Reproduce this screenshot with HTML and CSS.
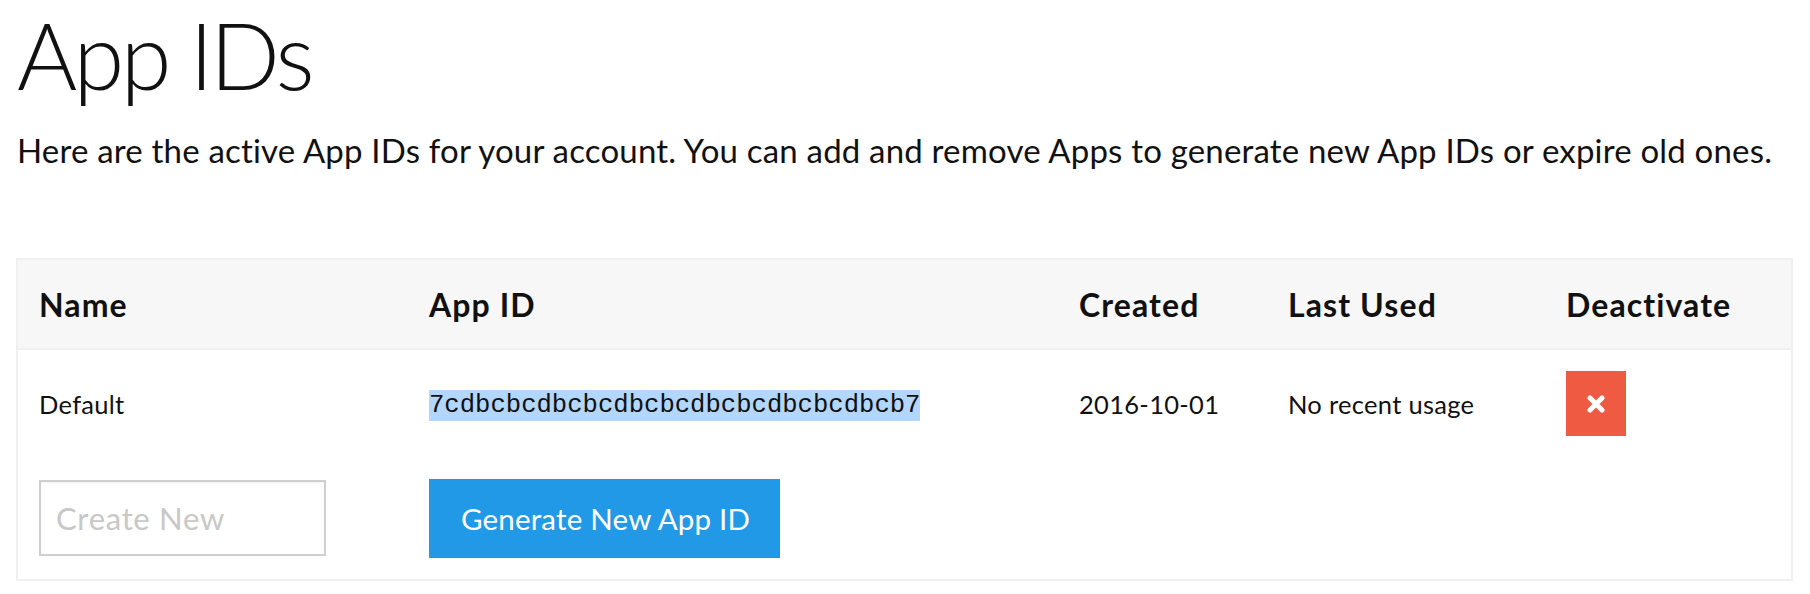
FILE: index.html
```html
<!DOCTYPE html>
<html>
<head>
<meta charset="utf-8">
<link rel="stylesheet" href="styles.css">
</head>
<body>
<main class="page">
  <h1 class="title">App IDs</h1>
  <p class="intro">Here are the active App IDs for your account. You can add and remove Apps to generate new App IDs or expire old ones.</p>
  <table class="ids">
    <colgroup>
      <col class="c1"><col class="c2"><col class="c3"><col class="c4"><col class="c5">
    </colgroup>
    <thead>
      <tr class="head">
        <th>Name</th>
        <th>App ID</th>
        <th>Created</th>
        <th>Last Used</th>
        <th>Deactivate</th>
      </tr>
    </thead>
    <tbody>
      <tr class="row">
        <td>Default</td>
        <td><span class="appid">7cdbcbcdbcbcdbcbcdbcbcdbcbcdbcb7</span></td>
        <td>2016-10-01</td>
        <td>No recent usage</td>
        <td><button class="del" type="button" aria-label="Deactivate"><svg width="18" height="18" viewBox="0 0 18 18"><path d="M3 3 L15 15 M15 3 L3 15" stroke="#fff" stroke-width="5" stroke-linecap="round"/></svg></button></td>
      </tr>
      <tr class="create">
        <td><input class="newname" type="text" placeholder="Create New"></td>
        <td colspan="4"><button class="gen" type="button">Generate New App ID</button></td>
      </tr>
    </tbody>
  </table>
</main>
</body>
</html>
```

FILE: styles.css
```css
html, body {
  margin: 0;
  padding: 0;
  background: #fff;
}
.page {
  padding: 5px 17px 0 16px;
  font-family: Lato, "Noto Sans", sans-serif;
  color: #111;
}
.title {
  margin: 0;
  font-size: 92px;
  line-height: 100px;
  font-weight: 300;
  padding-left: 1px;
  letter-spacing: -3.5px;
}
.intro {
  margin: 25px 0 0 1px;
  font-size: 33px;
  line-height: 40px;
  letter-spacing: 0.18px;
}
.ids {
  margin-top: 88px;
  width: 100%;
  border-collapse: collapse;
  table-layout: fixed;
  border: 2px solid #f0f0f0;
}
.c1 { width: 391px; }
.c2 { width: 650px; }
.c3 { width: 209px; }
.c4 { width: 278px; }
.c5 { width: auto; }
.ids th, .ids td {
  padding: 0 0 0 21px;
  text-align: left;
  vertical-align: middle;
}
.head {
  height: 90px;
  background: #f7f7f7;
  border-bottom: 2px solid #f0f0f0;
}
.head th {
  font-weight: 700;
  font-size: 32px;
  letter-spacing: 1.1px;
}
.row {
  height: 108px;
}
.row td {
  font-size: 25.5px;
  letter-spacing: 0.3px;
}
.appid {
  font-family: "Liberation Mono", "Courier New", monospace;
  font-size: 25.6px;
  letter-spacing: 0;
  background: #b3d6fd;
  padding: 1px 0;
}
.del {
  display: flex;
  align-items: center;
  justify-content: center;
  width: 60px;
  height: 65px;
  margin: 0;
  padding: 0;
  border: none;
  background: #ef5a43;
}
.create {
  height: 123px;
}
.newname {
  box-sizing: border-box;
  width: 287px;
  height: 76px;
  margin: 0;
  padding: 0 0 0 15px;
  border: 2px solid #cfcfcf;
  box-shadow: inset 0 1px 2px rgba(0,0,0,0.06);
  font-family: Lato, "Noto Sans", sans-serif;
  font-size: 31px;
  letter-spacing: 0.7px;
  color: #333;
  outline: none;
}
.newname::placeholder {
  color: #c8c8c8;
}
.gen {
  box-sizing: border-box;
  width: 351px;
  height: 79px;
  margin: 0;
  padding: 0 0 0 2px;
  border: none;
  background: #2299e6;
  color: #fff;
  font-family: Lato, "Noto Sans", sans-serif;
  font-size: 29.5px;
  letter-spacing: 0.2px;
  text-align: center;
}
```
